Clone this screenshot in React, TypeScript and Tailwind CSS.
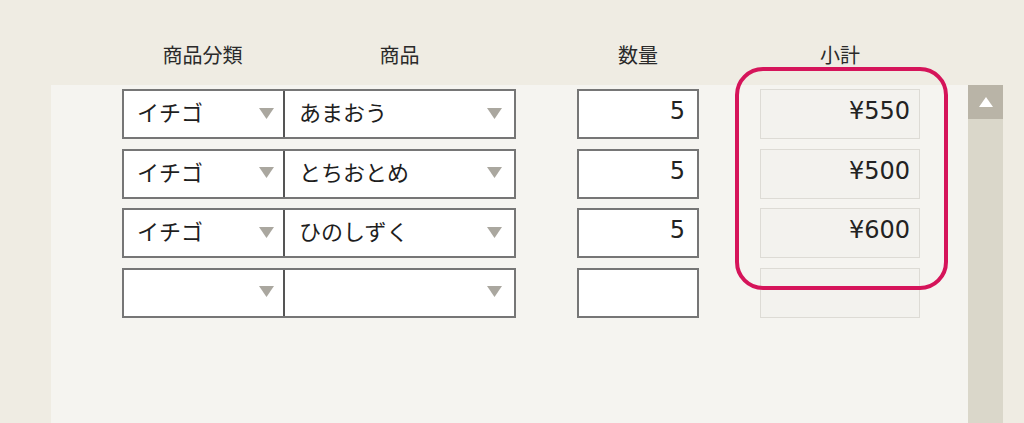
import React from "react";

const jp = { fontFamily: '"Noto Sans CJK JP", "Noto Sans", sans-serif' };
const num = { fontFamily: '"DejaVu Sans", "Liberation Sans", sans-serif' };

function Arrow() {
  return (
    <svg width="15" height="11" viewBox="0 0 15 11" className="shrink-0 mt-[4px]">
      <polygon points="0,0 15,0 7.5,11" fill="#aaa79f" />
    </svg>
  );
}

type Row = { cat: string; prod: string; qty: string; sub: string };

const rows: Row[] = [
  { cat: "イチゴ", prod: "あまおう", qty: "5", sub: "¥550" },
  { cat: "イチゴ", prod: "とちおとめ", qty: "5", sub: "¥500" },
  { cat: "イチゴ", prod: "ひのしずく", qty: "5", sub: "¥600" },
  { cat: "", prod: "", qty: "", sub: "" },
];

export default function App() {
  return (
    <div className="relative w-[1024px] h-[423px] overflow-hidden bg-[#efece3]" style={jp}>
      {/* header */}
      <div className="flex h-[85px] pl-[122px] items-end pb-[20px] text-[20px] leading-none text-[#2a2a2a]">
        <div className="w-[161px] text-center">商品分類</div>
        <div className="w-[233px] text-center">商品</div>
        <div className="w-[61px]" />
        <div className="w-[122px] text-center">数量</div>
        <div className="w-[61px]" />
        <div className="w-[160px] text-center">小計</div>
      </div>

      {/* body */}
      <div className="flex h-[338px]">
        <div className="w-[51px]" />
        <div className="w-[917px] bg-[#f5f4f0] pt-[4px] pl-[71px] flex flex-col gap-[9.67px]">
          {rows.map((r, i) => (
            <div key={i} className="flex h-[50px]">
              <div className="flex w-[394px] h-full bg-white border-2 border-[#767676]">
                <div className="w-[159px] flex items-center pl-[13px] pr-[9px] pb-[6px] text-[22px] text-[#1e1e1e]">
                  <span className="flex-1 leading-none">{r.cat}</span>
                  <Arrow />
                </div>
                <div className="flex-1 flex items-center pl-[14px] pr-[12px] pb-[6px] border-l-2 border-[#555] text-[22px] text-[#1e1e1e]">
                  <span className="flex-1 leading-none">{r.prod}</span>
                  <Arrow />
                </div>
              </div>
              <div className="w-[61px]" />
              <div className="w-[122px] h-full bg-white border-2 border-[#767676] flex items-center justify-end pr-[12px] pb-[6px] text-[24px] leading-none text-[#222]" style={num}>
                {r.qty}
              </div>
              <div className="w-[61px]" />
              <div className="w-[160px] h-full bg-[#f3f2ee] border border-[#dddbd5] flex items-center justify-end pr-[9px] pb-[6px] text-[24px] leading-none text-[#222]" style={num}>
                {r.sub}
              </div>
            </div>
          ))}
        </div>
        {/* scrollbar */}
        <div className="w-[35px] bg-[#dad7ca] flex flex-col">
          <div className="h-[34px] bg-[#b9b4a7] flex items-center justify-center">
            <svg width="14" height="10" viewBox="0 0 14 10">
              <polygon points="7,0 14,10 0,10" fill="#ffffff" />
            </svg>
          </div>
        </div>
        <div className="flex-1" />
      </div>

      {/* highlight ring */}
      <div className="absolute left-[735px] top-[67px] w-[213px] h-[223px] rounded-[28px] border-[4px] border-[#d5145a] pointer-events-none" />
    </div>
  );
}
